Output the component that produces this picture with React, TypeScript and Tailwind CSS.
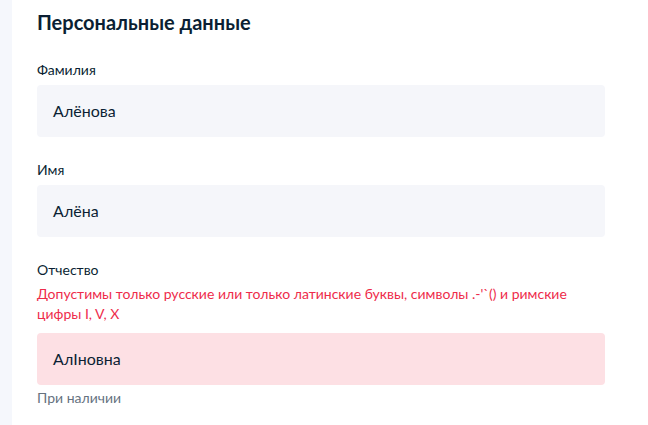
export default function App() {
  return (
    <div className="flex min-h-[425px] bg-white" style={{ fontFamily: 'Lato, "Noto Sans", sans-serif' }}>
      <div className="w-[12px] shrink-0 bg-[#f5f7fc]" />
      <div className="w-[568px] pl-[25px] box-content">
        <h2 className="mt-[8px] text-[20px] leading-[28px] font-bold text-[#0b1f33]">Персональные данные</h2>
        <Field label="Фамилия" value="Алёнова" className="mt-[24px]" />
        <Field label="Имя" value="Алёна" className="mt-[23px]" />
        <div className="mt-[23px]">
          <div className="text-[14px] leading-[20px] text-[#0b1f33]">Отчество</div>
          <div className="mt-[4px] text-[14px] leading-[20px] text-[#ee2c4b]">
            Допустимы только русские или только латинские буквы, символы .-'`() и римские цифры I, V, X
          </div>
          <div className="mt-[9px] h-[52px] rounded-[4px] bg-[#fde0e4] pl-[16px] flex items-center text-[16px] text-[#0b1f33]">
            АлІновна
          </div>
          <div className="mt-[3px] text-[14px] leading-[20px] text-[#66727f]">При наличии</div>
        </div>
      </div>
    </div>
  )
}

function Field({ label, value, className }: { label: string; value: string; className?: string }) {
  return (
    <div className={className}>
      <div className="text-[14px] leading-[20px] text-[#0b1f33]">{label}</div>
      <div className="mt-[5px] h-[52px] rounded-[4px] bg-[#f5f6fa] pl-[16px] flex items-center text-[16px] text-[#0b1f33]">
        {value}
      </div>
    </div>
  )
}
